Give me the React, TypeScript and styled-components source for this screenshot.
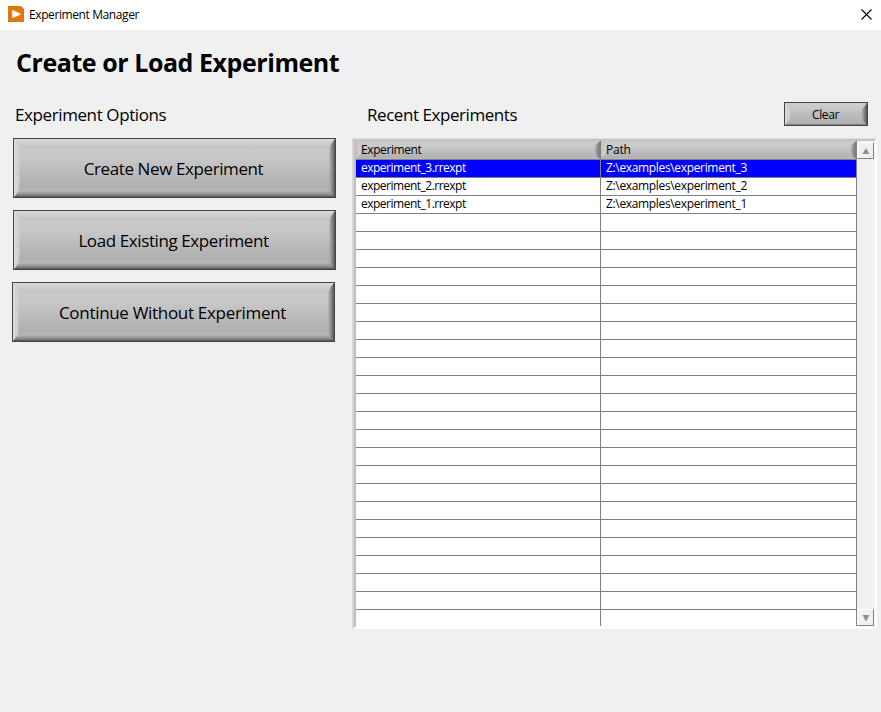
import React from "react";
import styled, { createGlobalStyle } from "styled-components";

const Global = createGlobalStyle`
  * { box-sizing: border-box; }
  body { margin: 0; background: #f0f0f0; color: #000; overflow: hidden; font-family: "Open Sans", "Noto Sans", sans-serif; }
`;

const Window = styled.div`
  width: 881px;
  height: 712px;
  background: #f0f0f0;
  display: flex;
  flex-direction: column;
`;

const TitleBar = styled.header`
  height: 30px;
  flex: none;
  background: #fff;
  display: flex;
  align-items: center;
  padding: 0 8px 2px;
  font-size: 12px;
`;

const Label = styled.span<{ $spacing?: number }>`
  white-space: nowrap;
  letter-spacing: ${(p) => p.$spacing ?? -0.4}px;
`;

const AppIcon = styled.svg`
  width: 16px;
  height: 16px;
  margin-right: 5px;
`;

const CloseIcon = styled.svg`
  width: 11px;
  height: 11px;
  margin: 0 1px 0 auto;
`;

const Heading = styled.h1`
  margin: 0;
  height: 66px;
  padding: 14px 0 0 16px;
  font-size: 25px;
  line-height: 36px;
  font-weight: 700;
`;

const Content = styled.main`
  display: grid;
  grid-template-columns: 340px 525px;
  padding-left: 12px;
`;

const Options = styled.section`
  display: flex;
  flex-direction: column;
  align-items: flex-start;
`;

const SectionTitle = styled.h2`
  margin: 0;
  height: 42px;
  padding: 6px 0 0 3px;
  font-size: 17px;
  line-height: 26px;
  font-weight: 400;
`;

const Bevel = styled.button`
  position: relative;
  border: 1px solid #444;
  border-radius: 0;
  padding: 0;
  color: #000;
  font-family: inherit;
  display: flex;
  align-items: center;
  justify-content: center;

  &::before,
  &::after {
    content: "";
    position: absolute;
    top: 0;
    bottom: 0;
    width: 6px;
  }
  &::before {
    left: 0;
    background: linear-gradient(90deg, #dedede, #d2d2d2 2px, #d4d4d4 4px, rgba(200, 200, 200, 0.3));
    clip-path: polygon(0 0, 4px 4px, 6px 10px, 6px calc(100% - 12px), 4px calc(100% - 5px), 0 100%);
  }
  &::after {
    right: 0;
    background: linear-gradient(90deg, rgba(160, 160, 160, 0.3), #9c9c9c 2px, #787878 4px, #585858);
    clip-path: polygon(100% 0, 2px 5px, 0 10px, 0 calc(100% - 10px), 2px calc(100% - 4px), 100% 100%);
  }
`;

const OptionButton = styled(Bevel)<{ $inset?: number }>`
  width: 323px;
  height: 60px;
  margin: 0 0 12px ${(p) => p.$inset ?? 0}px;
  font-size: 17px;
  padding: 1px 2px 0 0;
  background: linear-gradient(#d8d8d8, #d0d0d0 4px, #c7c7c7 8px, #cacaca 16px, #b0b0b0 47px, #b6b6b6 52px, #a0a0a0 54px, #858585 56px, #505050 58px);
`;

const ClearButton = styled(Bevel)`
  width: 84px;
  height: 24px;
  padding: 1px 1px 0 0;
  font-size: 12px;
  background: linear-gradient(#d0d0d0, #c8c8c8 5px, #b2b2b2 18px, #b6b6b6 20px, #999 21px, #777 22px);
`;

const RecentHeader = styled.div`
  height: 42px;
  display: flex;
  justify-content: space-between;
  padding: 6px 9px 0 12px;
`;

const RecentTitle = styled(SectionTitle)`
  padding-top: 0;
`;

const Frame = styled.div`
  width: 525px;
  height: 491px;
  border-style: solid;
  border-width: 1px 1px 1px 2px;
  border-color: #dedede #fff #fff #d6d6d6;
`;

const FrameInner = styled.div`
  height: 489px;
  display: flex;
  border-style: solid;
  border-width: 2px;
  border-color: #c4c4c4 #f8f8f8 #fff #bebebe;
`;

const Table = styled.div`
  width: 501px;
  height: 485px;
  overflow: hidden;
  border-right: 1px solid #808080;
`;

const Row = styled.div<{ $selected?: boolean }>`
  display: grid;
  grid-template-columns: 244px 1fr;
  height: 18px;
  background: ${(p) => (p.$selected ? "#0000ff" : "#fff")};
  color: ${(p) => (p.$selected ? "#fff" : "#000")};
  border-bottom: 1px solid #808080;
`;

const Cell = styled.div`
  padding-left: 5px;
  font-size: 12px;
  line-height: 16px;
  & + & { border-left: 1px solid #808080; }
`;

const HeaderRow = styled(Row)`
  height: 19px;
  background: linear-gradient(#c9c9c9, #cbcbcb 5px, #b1b1b1 16px, #b8b8b8);
`;

const HeaderCell = styled(Cell)`
  position: relative;
  line-height: 18px;

  &::before,
  &::after {
    content: "";
    position: absolute;
    top: 0;
    bottom: 0;
    width: 5px;
  }
  &::before {
    left: 0;
    background: linear-gradient(90deg, #c4c4c4, #d2d2d2);
    clip-path: polygon(0 0, 4px 4px, 5px 9px, 4px 14px, 0 100%);
  }
  &::after {
    right: 0;
    background: linear-gradient(90deg, #a8a8a8, #787878);
    clip-path: polygon(100% 0, 1px 4px, 0 9px, 1px 14px, 100% 100%);
  }
`;

const ScrollBar = styled.div`
  width: 17px;
  background: #f0f0f0;
  display: flex;
  flex-direction: column;
  justify-content: space-between;
  padding-top: 1px;
`;

const ScrollButton = styled.div`
  width: 17px;
  height: 17px;
  border: 1px solid;
  border-color: #fff #808080 #808080 #fff;
  display: flex;
  align-items: center;
  justify-content: center;
`;

const experiments = [
  { name: "experiment_3.rrexpt", path: "Z:\\examples\\experiment_3" },
  { name: "experiment_2.rrexpt", path: "Z:\\examples\\experiment_2" },
  { name: "experiment_1.rrexpt", path: "Z:\\examples\\experiment_1" },
];

export default function App() {
  return (
    <Window>
      <Global />
      <TitleBar>
        <AppIcon viewBox="0 0 16 16">
          <path d="M0 0H13L16 3V16H0Z" fill="#e2770b" />
          <path d="M4.7 4.5V11.5L12.3 8.2Z" fill="#fff" stroke="#fff" strokeLinejoin="round" />
        </AppIcon>
        <Label>Experiment Manager</Label>
        <CloseIcon viewBox="0 0 11 11">
          <path d="M.5 .5L10.5 10.5M10.5 .5L.5 10.5" stroke="#000" strokeWidth="1.1" />
        </CloseIcon>
      </TitleBar>
      <Heading><Label $spacing={-0.44}>Create or Load Experiment</Label></Heading>
      <Content>
        <Options>
          <SectionTitle><Label>Experiment Options</Label></SectionTitle>
          <OptionButton $inset={1}><Label>Create New Experiment</Label></OptionButton>
          <OptionButton $inset={1}><Label>Load Existing Experiment</Label></OptionButton>
          <OptionButton><Label $spacing={-0.31}>Continue Without Experiment</Label></OptionButton>
        </Options>
        <section>
          <RecentHeader>
            <RecentTitle><Label $spacing={-0.44}>Recent Experiments</Label></RecentTitle>
            <ClearButton><Label>Clear</Label></ClearButton>
          </RecentHeader>
          <Frame>
            <FrameInner>
              <Table>
                <HeaderRow>
                  <HeaderCell><Label>Experiment</Label></HeaderCell>
                  <HeaderCell><Label $spacing={-0.25}>Path</Label></HeaderCell>
                </HeaderRow>
                {Array.from({ length: 26 }, (_, i) => (
                  <Row key={i} $selected={i === 0}>
                    <Cell><Label $spacing={-0.5}>{experiments[i]?.name}</Label></Cell>
                    <Cell><Label $spacing={-0.34}>{experiments[i]?.path}</Label></Cell>
                  </Row>
                ))}
              </Table>
              <ScrollBar>
                <ScrollButton>
                  <svg width="8" height="8" viewBox="0 0 8 8"><path d="M4 1L7.5 7H.5Z" fill="#909090" /></svg>
                </ScrollButton>
                <ScrollButton>
                  <svg width="8" height="8" viewBox="0 0 8 8"><path d="M.5 1H7.5L4 7.5Z" fill="#909090" /></svg>
                </ScrollButton>
              </ScrollBar>
            </FrameInner>
          </Frame>
        </section>
      </Content>
    </Window>
  );
}
